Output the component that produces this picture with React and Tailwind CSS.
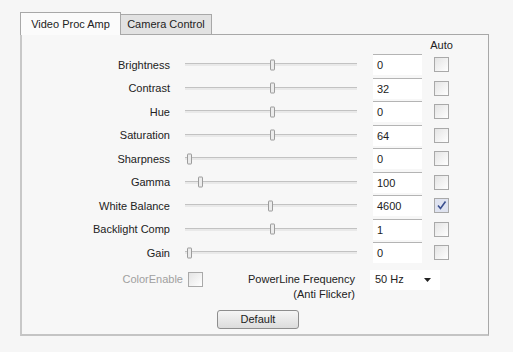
const rows = [
  { label: "Brightness", value: "0", thumb: 85 },
  { label: "Contrast", value: "32", thumb: 85 },
  { label: "Hue", value: "0", thumb: 85 },
  { label: "Saturation", value: "64", thumb: 85 },
  { label: "Sharpness", value: "0", thumb: 2 },
  { label: "Gamma", value: "100", thumb: 13 },
  { label: "White Balance", value: "4600", thumb: 83, auto: true },
  { label: "Backlight Comp", value: "1", thumb: 85 },
  { label: "Gain", value: "0", thumb: 2 },
];

const Checkbox = ({ checked }) => (
  <div
    className={
      "w-[15px] h-[15px] border border-[#a9a9a9] flex items-center justify-center " +
      (checked ? "bg-[#dfe3f0]" : "bg-gradient-to-br from-[#e4e4e4] to-white")
    }
  >
    {checked && (
      <svg width="11" height="11" viewBox="0 0 11 11">
        <path d="M2 5.5 L4.5 8.5 L9.5 1.5" fill="none" stroke="#3a4f8f" strokeWidth="1.6" />
      </svg>
    )}
  </div>
);

const Slider = ({ thumb }) => (
  <div className="relative w-[172px] h-full flex items-center">
    <div className="w-full h-[3px] border-t border-[#c2c2c2] bg-[#e9e9e9]" />
    <div
      className="absolute top-1/2 -translate-y-1/2 w-[5px] h-[11px] bg-[#ececec] border border-[#9c9c9c] rounded-[1px]"
      style={{ left: thumb }}
    />
  </div>
);

export default function App() {
  return (
    <div
      className="w-[513px] h-[352px] bg-[#f6f6f6] pt-[12px] pl-[20px] text-[#222] text-[11px]"
      style={{ fontFamily: "'Liberation Sans', Arial, sans-serif" }}
    >
      {/* tabs */}
      <div className="flex items-end h-[22px]">
        <div className="relative z-10 w-[101px] h-[23px] -mb-px bg-[#fbfbfb] border border-b-0 border-[#a8a8a8] flex items-center justify-center">
          Video Proc Amp
        </div>
        <div className="w-[91px] h-[20px] bg-[#e2e2e2] border border-l-0 border-b-0 border-[#a8a8a8] flex items-center justify-center">
          Camera Control
        </div>
      </div>

      {/* panel */}
      <div className="w-[469px] h-[302px] bg-[#f7f7f7] border border-[#a8a8a8] border-l-2 border-l-[#c8c8c8] border-b-2 border-b-[#c4c4c4]">
        <div className="flex h-[18px] items-center pt-[2px]">
          <div className="w-[412px]" />
          <div className="w-[15px] flex justify-center whitespace-nowrap">Auto</div>
        </div>

        {rows.map((r) => (
          <div key={r.label} className="flex items-center h-[23.5px]">
            <div className="w-[148px] text-right whitespace-nowrap">{r.label}</div>
            <div className="ml-[15px] h-full">
              <Slider thumb={r.thumb} />
            </div>
            <div className="ml-[16px] w-[49px] h-[21px] bg-white border-t border-[#b4b4b4] pl-[4px] leading-[21px]">
              {r.value}
            </div>
            <div className="ml-[12px]">
              <Checkbox checked={r.auto} />
            </div>
          </div>
        ))}

        <div className="flex items-start mt-[5px]">
          <div className="w-[161px] text-right leading-[18px] text-[#a0a0a0]">ColorEnable</div>
          <div className="ml-[5px] mt-[2px]">
            <Checkbox />
          </div>
          <div className="w-[152px] text-right leading-[15px] pt-[2px]">
            <div>PowerLine Frequency</div>
            <div>(Anti Flicker)</div>
          </div>
          <div className="ml-[15px] w-[70px] h-[20px] bg-white flex items-center pl-[5px] relative">
            50 Hz
            <svg className="absolute right-[9px] top-[8px]" width="7" height="4" viewBox="0 0 7 4">
              <path d="M0 0 H7 L3.5 4 Z" fill="#222" />
            </svg>
          </div>
        </div>

        <div className="ml-[195px] mt-[8px] w-[82px] h-[19px] rounded-[3px] border border-[#8e8e8e] bg-gradient-to-b from-[#f6f6f6] to-[#dcdcdc] flex items-center justify-center">
          Default
        </div>
      </div>
    </div>
  );
}
